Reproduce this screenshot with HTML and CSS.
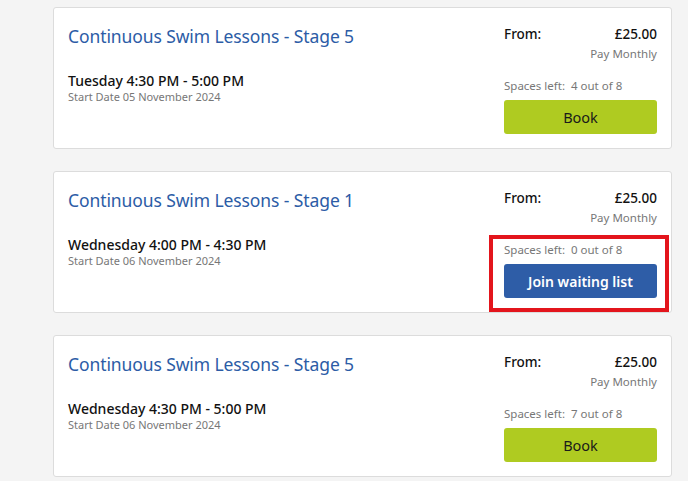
FILE: index.html
```html
<!DOCTYPE html>
<html>
<head>
<meta charset="utf-8">
<link rel="stylesheet" href="styles.css">
</head>
<body>
<div class="list">
  <div class="card">
    <div class="info">
      <h2 class="title">Continuous Swim Lessons - Stage 5</h2>
      <div class="time">Tuesday 4:30 PM - 5:00 PM</div>
      <div class="date">Start Date 05 November 2024</div>
    </div>
    <div class="side">
      <div class="price-row"><span>From:</span><span>£25.00</span></div>
      <div class="plan">Pay Monthly</div>
      <div class="action">
        <div class="spaces">Spaces left:&nbsp; 4 out of 8</div>
        <button class="btn btn-book">Book</button>
      </div>
    </div>
  </div>
  <div class="card">
    <div class="info">
      <h2 class="title">Continuous Swim Lessons - Stage 1</h2>
      <div class="time">Wednesday 4:00 PM - 4:30 PM</div>
      <div class="date">Start Date 06 November 2024</div>
    </div>
    <div class="side">
      <div class="price-row"><span>From:</span><span>£25.00</span></div>
      <div class="plan">Pay Monthly</div>
      <div class="action highlighted">
        <div class="spaces">Spaces left:&nbsp; 0 out of 8</div>
        <button class="btn btn-wait">Join waiting list</button>
        <div class="highlight-box"></div>
      </div>
    </div>
  </div>
  <div class="card">
    <div class="info">
      <h2 class="title">Continuous Swim Lessons - Stage 5</h2>
      <div class="time">Wednesday 4:30 PM - 5:00 PM</div>
      <div class="date">Start Date 06 November 2024</div>
    </div>
    <div class="side">
      <div class="price-row"><span>From:</span><span>£25.00</span></div>
      <div class="plan">Pay Monthly</div>
      <div class="action">
        <div class="spaces">Spaces left:&nbsp; 7 out of 8</div>
        <button class="btn btn-book">Book</button>
      </div>
    </div>
  </div>
</div>
</body>
</html>
```
FILE: styles.css
```css
* { box-sizing: border-box; }
html, body { margin: 0; padding: 0; }
body {
  background: #f4f4f4;
  font-family: "Noto Sans", "Open Sans", sans-serif;
  color: #111;
}
.list {
  display: flex;
  flex-direction: column;
  gap: 22px;
  padding: 7px 16px 0 53px;
}
.card {
  width: 619px;
  height: 142px;
  background: #fff;
  border: 1px solid #dcdcdc;
  border-radius: 3px;
  display: flex;
  justify-content: space-between;
  padding: 0 14px 0 14px;
}
.info { padding-top: 14px; }
.title {
  margin: 0;
  font-size: 17.5px;
  font-weight: 400;
  color: #2c5ca6;
  line-height: 28px;
  letter-spacing: -0.1px;
}
.time {
  margin-top: 22px;
  font-size: 14px;
  font-weight: 500;
  line-height: 18px;
  color: #111;
}
.date {
  font-size: 11px;
  color: #777;
  line-height: 14px;
}
.side {
  width: 153px;
  padding-top: 16px;
  display: flex;
  flex-direction: column;
}
.price-row {
  display: flex;
  justify-content: space-between;
  font-size: 13.5px;
  font-weight: 500;
  line-height: 20px;
}
.plan {
  text-align: right;
  font-size: 11.5px;
  color: #777;
  line-height: 16px;
  margin-top: 2px;
}
.action {
  position: relative;
  margin-top: 16px;
}
.spaces {
  font-size: 11.5px;
  color: #777;
  line-height: 16px;
}
.btn {
  display: block;
  width: 153px;
  height: 34px;
  margin-top: 6px;
  border: none;
  border-radius: 3px;
  font-family: inherit;
  font-size: 14.5px;
}
.btn-book { background: #afcb21; color: #1a1a1a; }
.btn-wait { background: #2e5da7; color: #fff; font-weight: 600; font-size: 14px; }
.highlight-box {
  position: absolute;
  left: -15px;
  top: -7px;
  right: -12px;
  bottom: -14px;
  border: 4px solid #e3151c;
}
```
